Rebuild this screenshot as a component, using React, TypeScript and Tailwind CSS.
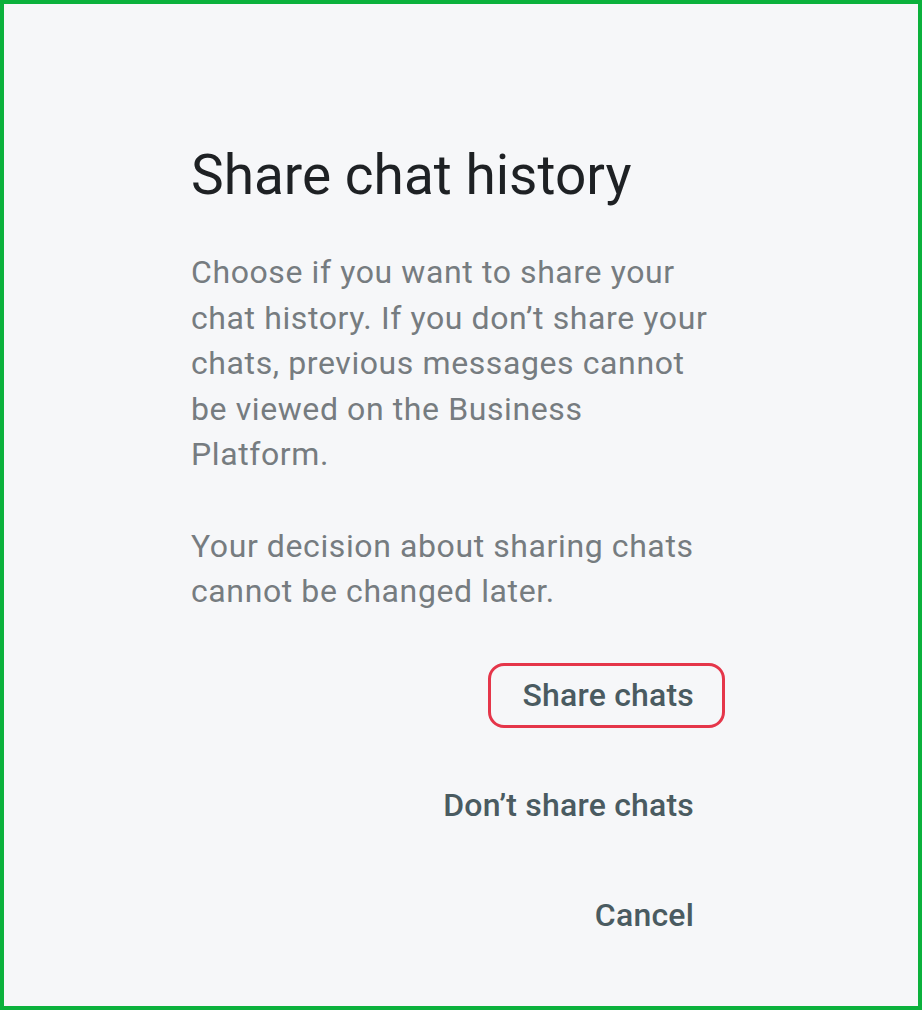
import React from "react";

type ActionProps = {
  label: string;
  highlighted?: boolean;
};

const Action: React.FC<ActionProps> = ({ label, highlighted }) => {
  return (
    <button
      className={
        highlighted
          ? "h-[65px] rounded-[16px] border-[3px] border-[#e5364a] pl-[31px] pr-[28px] text-[32px] font-medium leading-[59px] tracking-[0.2px] text-[#4a5b61]"
          : "h-[65px] rounded-[16px] border-[3px] border-transparent pl-[31px] pr-[28px] text-[32px] font-medium leading-[59px] tracking-[0.2px] text-[#4a5b61]"
      }
    >
      {label}
    </button>
  );
};

export default function App() {
  return (
    <div
      className="h-[1010px] w-[922px] border-4 border-[#0bb13c] bg-[#f6f7f9]"
      style={{ fontFamily: "Roboto, 'Noto Sans', sans-serif" }}
    >
      <div className="flex w-[721px] flex-col pl-[187px] pt-[139px]">
        <h1 className="text-[55px] font-normal leading-[64px] text-[#1e2124]">
          Share chat history
        </h1>
        <div className="mt-[43px] max-w-[520px] text-[32px] leading-[45.5px] tracking-[0.6px] text-[#767c80]">
          <p>
            Choose if you want to share your chat history. If you don’t share
            your chats, previous messages cannot be viewed on the Business
            Platform.
          </p>
          <p className="mt-[46px]">
            Your decision about sharing chats cannot be changed later.
          </p>
        </div>
        <div className="mt-[48px] flex flex-col items-end gap-[45px]">
          <Action label="Share chats" highlighted />
          <Action label="Don’t share chats" />
          <Action label="Cancel" />
        </div>
      </div>
    </div>
  );
}
